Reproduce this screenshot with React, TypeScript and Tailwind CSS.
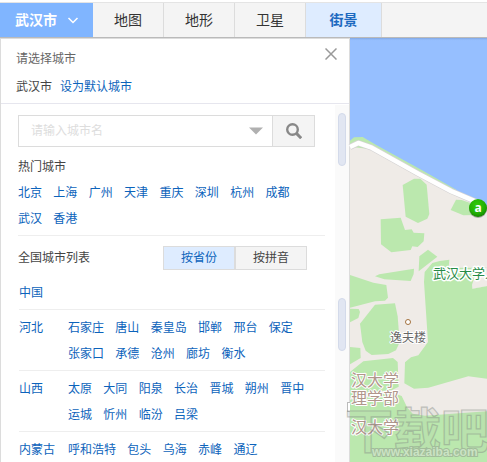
import { Fragment } from "react";

const hotCities = ["北京", "上海", "广州", "天津", "重庆", "深圳", "杭州", "成都", "武汉", "香港"];

const provinces: { name: string; cities: string[] }[] = [
  { name: "中国", cities: [] },
  {
    name: "河北",
    cities: ["石家庄", "唐山", "秦皇岛", "邯郸", "邢台", "保定", "张家口", "承德", "沧州", "廊坊", "衡水"],
  },
  {
    name: "山西",
    cities: ["太原", "大同", "阳泉", "长治", "晋城", "朔州", "晋中", "运城", "忻州", "临汾", "吕梁"],
  },
  { name: "内蒙古", cities: ["呼和浩特", "包头", "乌海", "赤峰", "通辽"] },
];

function CityLinks({ cities }: { cities: string[] }) {
  return (
    <>
      {cities.map((city) => (
        <Fragment key={city}>
          <a href="#" className="mr-2 inline-block whitespace-nowrap text-[#0c63bb]">
            {city}
          </a>{" "}
        </Fragment>
      ))}
    </>
  );
}

function TopBar() {
  return (
    <header className="shrink-0 pt-0.5">
      <nav className="flex h-9 border-t border-b border-t-[#e4e4e4] border-b-[#bababa] bg-[#f4f4f4] text-sm text-[#333]">
        <button className="flex w-[93px] items-center gap-2.5 bg-[#80b5ff] pl-[15px] font-bold text-white">
          武汉市
          <svg className="size-3" viewBox="0 0 12 12" fill="none" stroke="currentColor" strokeWidth="1.5">
            <path d="M1.5 4 6 8.5 10.5 4" />
          </svg>
        </button>
        {["地图", "地形", "卫星"].map((name) => (
          <button key={name} className="w-[71px] border-r border-[#dcdcdc]">
            {name}
          </button>
        ))}
        <button className="w-[76px] border-r border-[#dcdcdc] bg-[#deecff] font-bold text-[#1c69c0]">街景</button>
      </nav>
    </header>
  );
}

function CityPanel() {
  return (
    <aside className="relative flex w-[350px] shrink-0 flex-col border border-b-0 border-[#dcdcdc] bg-white text-[#444]">
      <div className="flex h-[65px] shrink-0 justify-between border-b border-[#e6e6ee] pt-1.5 pl-[15px]">
        <div className="leading-7">
          <h2 className="text-[#666]">请选择城市</h2>
          <p>
            武汉市
            <a href="#" className="ml-2 text-[#0c63bb]">
              设为默认城市
            </a>
          </p>
        </div>
        <button aria-label="关闭" className="mt-[3px] mr-3 size-3">
          <svg className="size-3" viewBox="0 0 12 12" fill="none" stroke="#999" strokeWidth="1.5">
            <path d="M.5.5l11 11M11.5.5l-11 11" />
          </svg>
        </button>
      </div>

      <div className="flex min-h-0 flex-1">
        <div className="min-w-0 flex-1 pt-[11px] pl-[17px]">
          <form className="mr-5 flex h-8 border border-[#dcdcdc]">
            <input
              aria-label="城市名"
              placeholder="请输入城市名"
              className="min-w-0 flex-1 pl-3 outline-none placeholder:text-[#ddd]"
            />
            <button type="button" aria-label="展开" className="flex w-8 items-center justify-center">
              <svg className="h-2 w-4" viewBox="0 0 16 8">
                <path d="M1 .5h14L8 7.5z" fill="#b0b0b0" />
              </svg>
            </button>
            <button
              type="button"
              aria-label="搜索"
              className="flex w-[42px] items-center justify-center border-l border-[#dcdcdc] bg-[#f4f4f4]"
            >
              <svg className="size-4" viewBox="0 0 16 16" fill="none" stroke="#888">
                <circle cx="6.5" cy="6.5" r="5.3" strokeWidth="2.4" />
                <path d="m10.4 10.4 4.8 4.8" strokeWidth="3" />
              </svg>
            </button>
          </form>

          <section className="mr-2.5 border-b border-[#eee] pt-[7px] pb-[3px] leading-[26px]">
            <h3>热门城市</h3>
            <div className="pr-5">
              <CityLinks cities={hotCities} />
            </div>
          </section>

          <div className="mt-2.5 mr-7 mb-1 flex h-6 items-center justify-between">
            <h3>全国城市列表</h3>
            <div className="flex h-6 w-36">
              <button className="flex-1 border border-[#dcdcdc] bg-[#deecff] text-[#0c63bb]">按省份</button>
              <button className="flex-1 border border-[#dcdcdc] bg-[#f4f4f4]">按拼音</button>
            </div>
          </div>

          <ul className="mr-2.5 ml-px pt-px leading-[26px]">
            {provinces.map(({ name, cities }) => (
              <li key={name} className="flex border-b border-[#eee] pt-[5px] pb-[3px]">
                <a href="#" className="w-[49px] shrink-0 text-[#0c63bb]">
                  {name}
                </a>
                <div className="min-w-0 flex-1">
                  <CityLinks cities={cities} />
                </div>
              </li>
            ))}
          </ul>
        </div>

        <div className="mt-px w-3.5 shrink-0 bg-[#fafafa] pt-2 pl-[3px]">
          <div className="h-[53px] w-2 rounded-full border border-[#d3daea] bg-[#e1e6f2]" />
          <div className="mt-[132px] h-[53px] w-2 rounded-full border border-[#d3daea] bg-[#e1e6f2]" />
        </div>
      </div>
      <div className="absolute top-[363px] -right-px h-2.5 w-[3px] border border-r-0 border-[#bbb] bg-white" />
    </aside>
  );
}

function CampusMap() {
  return (
    <div className="min-w-0 flex-1 bg-[#96bfff]">
      <svg
        className="relative h-full w-full overflow-visible"
        viewBox="350 38 137 424"
        preserveAspectRatio="xMinYMin slice"
      >
        <defs>
          <radialGradient id="pin" cx=".45" cy=".35" r=".65">
            <stop offset="0" stopColor="#33cc08" />
            <stop offset=".7" stopColor="#22ae03" />
            <stop offset="1" stopColor="#168400" />
          </radialGradient>
          <linearGradient id="shade" x1="0" y1="0" x2="0" y2="1">
            <stop offset="0" stopColor="#6f93cc" stopOpacity=".6" />
            <stop offset="1" stopColor="#96bfff" stopOpacity="0" />
          </linearGradient>
        </defs>
        <rect x="350" y="38" width="137" height="3" fill="url(#shade)" />

        <g transform="translate(345 110) scale(.33333)">
          <path d="M15 110 40 98 80 112 220 188 320 242 426 290V1056H15z" fill="#efebe7" />
          <path d="M15 92 27 82 53 81 95 106 230 180 335 240 320 242 80 118 15 110z" fill="#bbe8ae" />
          <path d="M15 111 40 99 80 113 220 191 320 244 400 278" fill="none" stroke="#d5d3d4" strokeWidth="18" strokeLinejoin="round" />
          <path d="M15 111 40 99 80 113 220 191 320 244 400 278" fill="none" stroke="#fff" strokeWidth="14" strokeLinejoin="round" />
          <g fill="#bbe8ae">
            <path d="M173 225 207 206 226 206 245 224 253 312 247 326 219 339 182 320z" />
            <path d="M317 300 333 269 350 270 385 282 400 315 355 316z" />
            <path d="M107 328 167 323 180 360 200 358 206 368 238 370 236 394 218 411 202 409 197 420 139 427 108 403z" />
            <path d="M223 439 249 419 277 440 221 484z" />
            <path d="M90 499 103 493 207 476 206 492 197 513 118 508z" />
            <path d="M15 495 85 518 124 525 129 563 120 572 90 574 15 593z" />
          </g>
        </g>

        <g transform="translate(345 282) scale(.33333)">
          <g fill="#bbe8ae">
            <path d="M237 0 239 -30 262 -57 284 -63 313 -67 311 -43 380 -30 382 20 426 12V290L370 283 250 317 207 320 178 304 180 241 198 226 220 220 249 180z" />
            <path d="M311 -43h115v55l-44 8z" />
            <path d="M90 68 150 64 158 103 164 181 153 205 130 216 80 219 62 206 52 180 45 125z" />
            <path d="M15 80 41 81 45 90 40 108 15 121z" />
            <path d="M15 195 46 198 47 228 15 247z" />
            <path d="M15 270 55 238 144 228 158 240 161 314 141 324 80 330 15 347z" />
            <path d="M15 353 140 331 170 342 187 377 203 395 240 401 426 388V540H15z" />
          </g>
          <path d="m382 20-1-12 14-42 31-9v55z" fill="#efebe7" />
        </g>

        <circle cx="408" cy="322" r="2.5" fill="#fff" stroke="#a3713d" />
        <g fontFamily="'Liberation Sans', 'Noto Sans CJK SC', sans-serif" stroke="#fff" paintOrder="stroke" strokeLinejoin="round">
          <text x="433" y="278" fontSize="13" fill="#278b47" strokeWidth="3">武汉大学人</text>
          <text x="390" y="342" fontSize="12" fill="#666" strokeWidth="2">逸夫楼</text>
          <g fontSize="16" fill="#b0968b" strokeWidth="2">
            <text x="351" y="386">汉大学</text>
            <text x="351" y="404">理学部</text>
            <text x="351" y="433">汉大学</text>
          </g>
        </g>

        <circle cx="478" cy="209" r="9" fill="#777" opacity=".6" />
        <circle cx="478" cy="208" r="9" fill="url(#pin)" />
        <text x="478" y="212" textAnchor="middle" fontSize="12" fontWeight="bold" fill="#fff" fontFamily="'Open Sans', sans-serif">
          a
        </text>

        <g opacity=".45" stroke="#858a85" fill="#aebba8" fillOpacity=".3" fontWeight="bold">
          <text x="345" y="448" fontSize="48" strokeWidth="1.2" fontFamily="'Noto Sans CJK SC', sans-serif">下载吧</text>
          <text x="372" y="456" fontSize="12" fill="#ddd" fillOpacity="1" strokeWidth="2" paintOrder="stroke" fontFamily="'Liberation Sans', sans-serif">
            www.xiazaiba.com
          </text>
        </g>
      </svg>
    </div>
  );
}

export default function App() {
  return (
    <div className="flex h-screen flex-col overflow-hidden bg-white font-['Liberation_Sans','Noto_Sans_CJK_SC',sans-serif] text-xs">
      <TopBar />
      <main className="flex min-h-0 flex-1">
        <CityPanel />
        <CampusMap />
      </main>
    </div>
  );
}
